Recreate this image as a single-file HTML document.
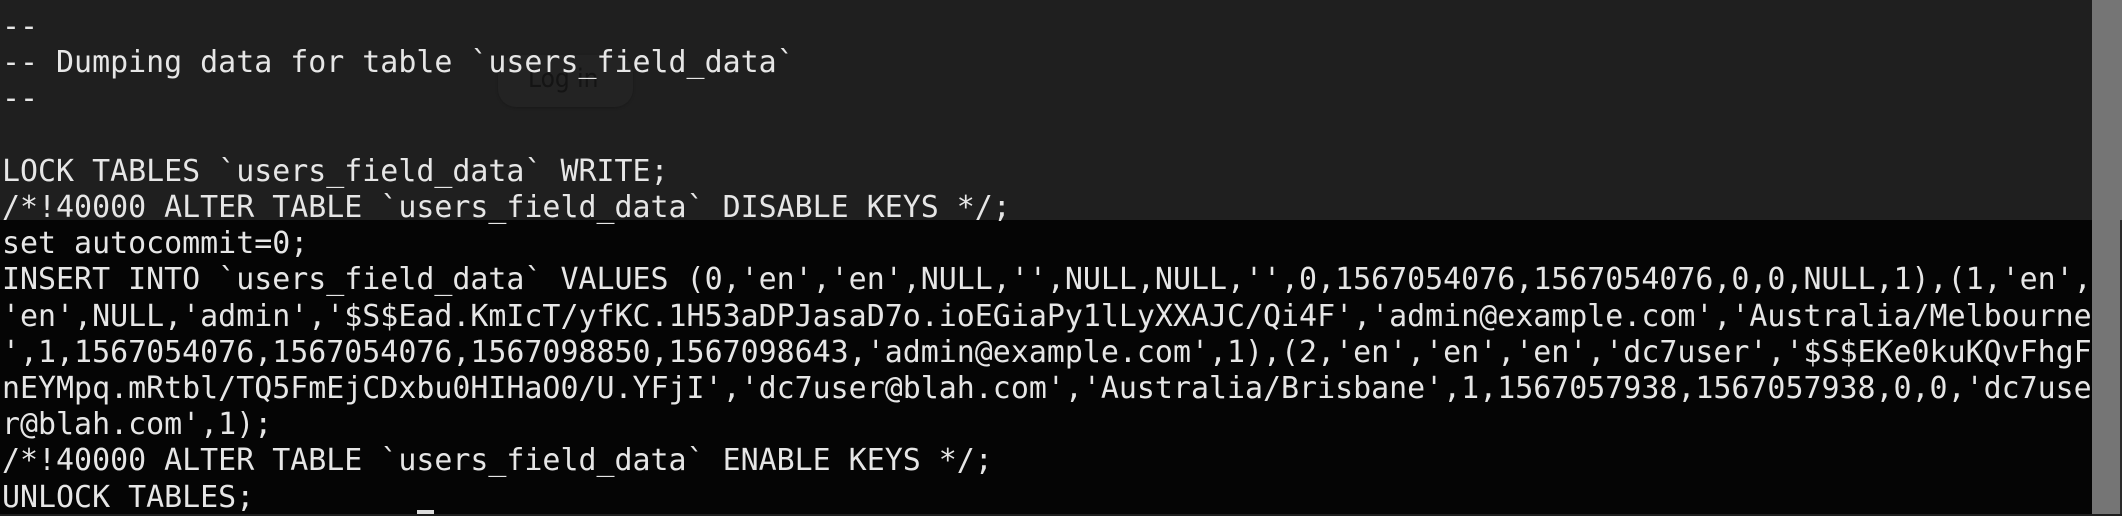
<!DOCTYPE html>
<html><head><meta charset="utf-8"><style>
html,body{margin:0;padding:0;}
body{width:2122px;height:514px;overflow:hidden;background:#1e1e1e;position:relative;font-family:"DejaVu Sans Mono",monospace;}
#top{position:absolute;left:0;top:0;width:2092px;height:220px;background:#1f1f1f;}
#bot{position:absolute;left:0;top:220px;width:2092px;height:294px;background:#050505;}
#sb{position:absolute;left:2092px;top:0;width:30px;height:514px;background:#757575;}
#sb2{position:absolute;left:2120px;top:220px;width:2px;height:294px;background:#2a2a2a;}
#btn{position:absolute;left:498px;top:55px;width:135px;height:52px;border-radius:18px;background:#232323;box-shadow:0 1px 2px #1a1a1a;}
#btn span{position:absolute;left:30px;top:9px;font-family:"DejaVu Sans Condensed","Liberation Sans",sans-serif;font-size:26px;color:#141414;}
pre{position:absolute;left:2px;top:9px;margin:0;font-family:"DejaVu Sans Mono",monospace;font-size:30px;line-height:36.2px;color:#e6e6e6;white-space:pre;transform:scaleX(0.9974);transform-origin:0 0;}
#cur{position:absolute;left:417px;top:510px;width:17px;height:4px;background:#ddd;}
</style></head><body>
<div id="top"></div><div id="bot"></div><div id="sb"></div><div id="sb2"></div>
<div id="btn"><span>Log in</span></div>
<pre>--
-- Dumping data for table `users_field_data`
--

LOCK TABLES `users_field_data` WRITE;
/*!40000 ALTER TABLE `users_field_data` DISABLE KEYS */;
set autocommit=0;
INSERT INTO `users_field_data` VALUES (0,'en','en',NULL,'',NULL,NULL,'',0,1567054076,1567054076,0,0,NULL,1),(1,'en',
'en',NULL,'admin','$S$Ead.KmIcT/yfKC.1H53aDPJasaD7o.ioEGiaPy1lLyXXAJC/Qi4F','admin@example.com','Australia/Melbourne
',1,1567054076,1567054076,1567098850,1567098643,'admin@example.com',1),(2,'en','en','en','dc7user','$S$EKe0kuKQvFhgF
nEYMpq.mRtbl/TQ5FmEjCDxbu0HIHaO0/U.YFjI','dc7user@blah.com','Australia/Brisbane',1,1567057938,1567057938,0,0,'dc7use
r@blah.com',1);
/*!40000 ALTER TABLE `users_field_data` ENABLE KEYS */;
UNLOCK TABLES;</pre>
<div id="cur"></div>
</body></html>
